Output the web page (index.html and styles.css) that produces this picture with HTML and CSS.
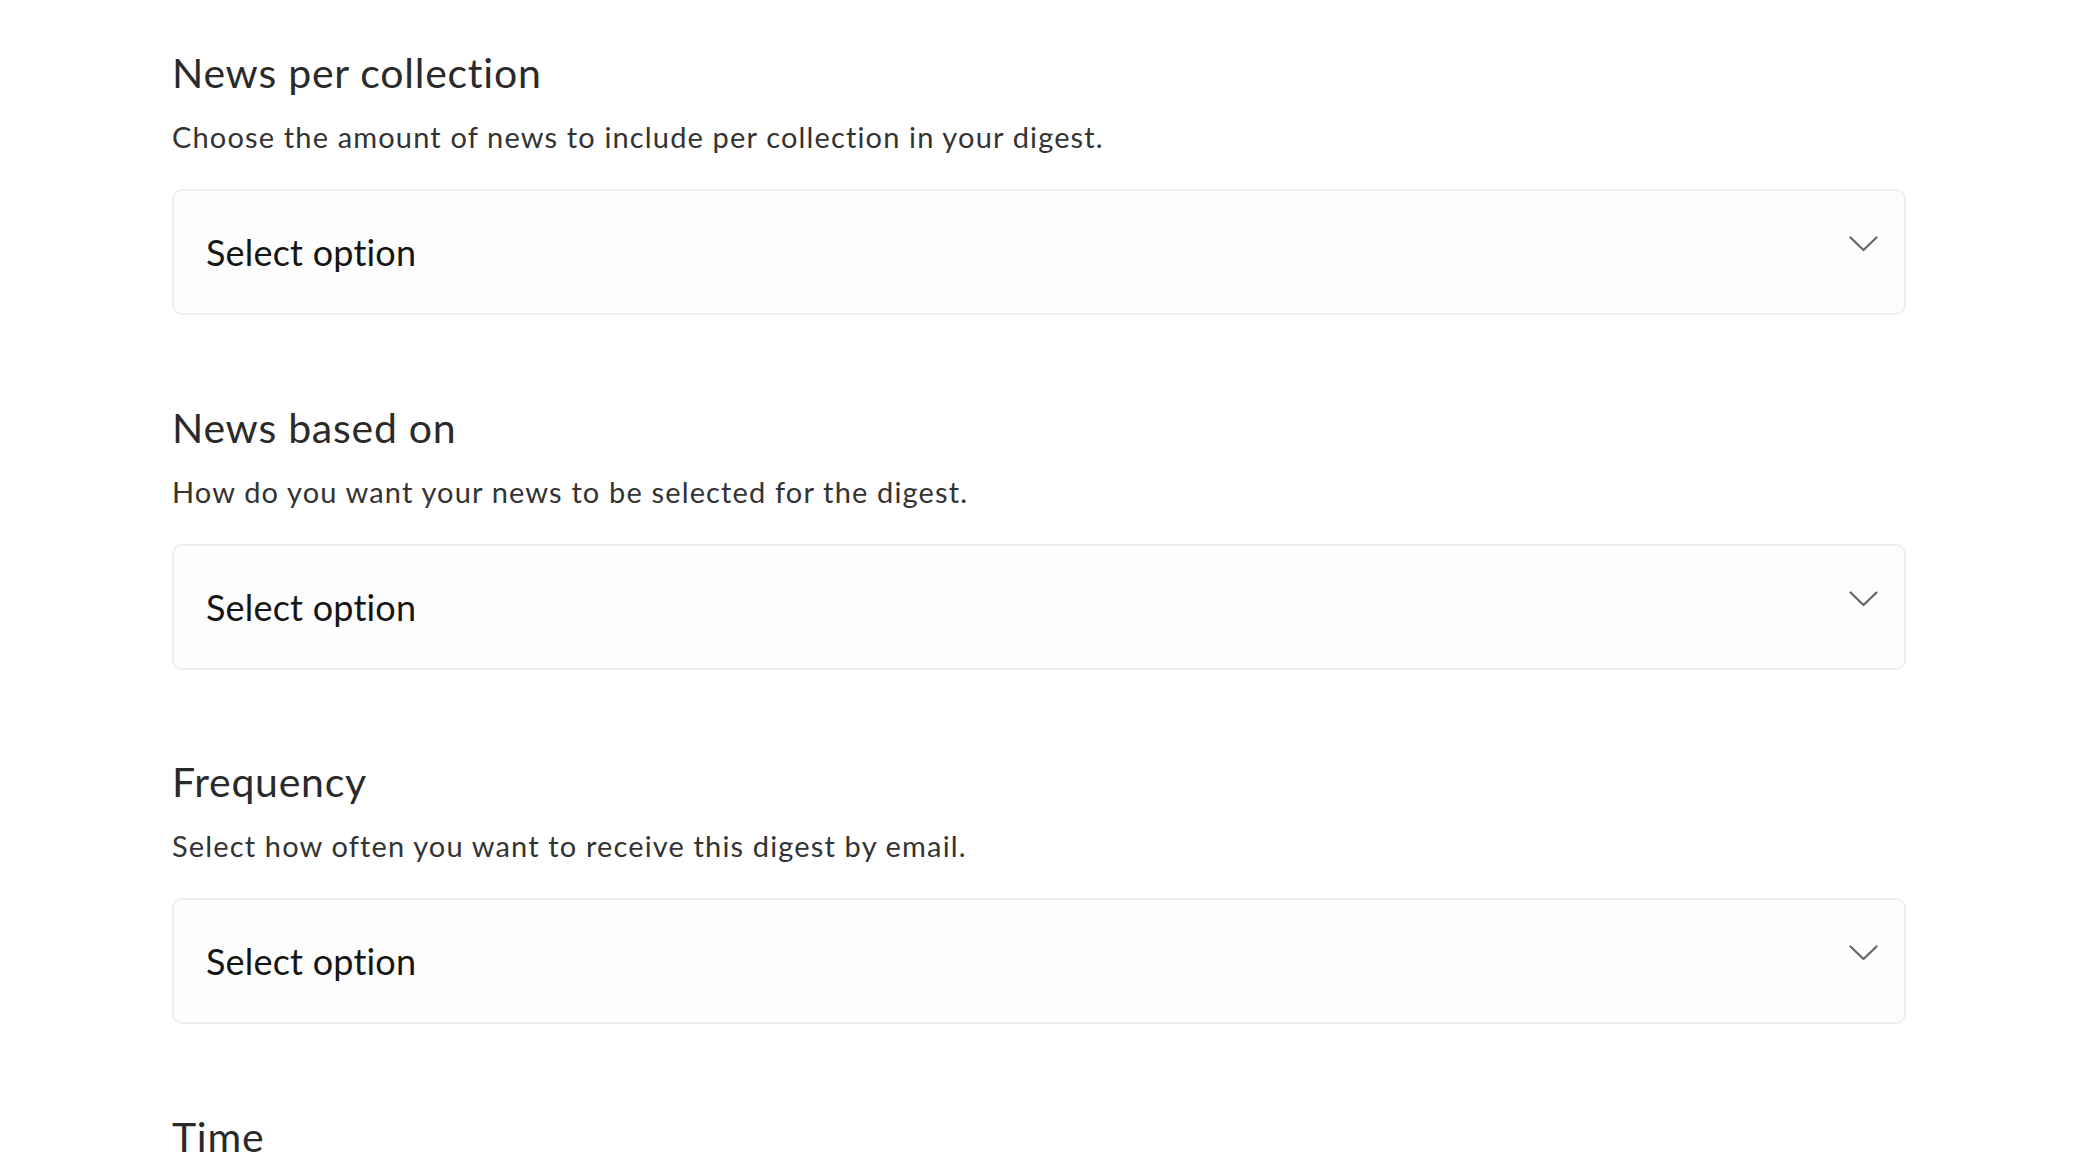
FILE: index.html
```html
<!DOCTYPE html>
<html lang="en">
<head>
<meta charset="utf-8">
<title>Digest settings</title>
<link rel="stylesheet" href="styles.css">
</head>
<body>
<main class="form">
  <section class="field">
    <h2 class="field-title">News per collection</h2>
    <p class="field-desc">Choose the amount of news to include per collection in your digest.</p>
    <div class="select">
      <span class="select-value">Select option</span>
      <svg class="chevron" width="29" height="16" viewBox="0 0 29 16"><polyline points="1.5,1.5 14.5,14 27.5,1.5" fill="none" stroke="#666" stroke-width="2.2" stroke-linecap="round" stroke-linejoin="round"/></svg>
    </div>
  </section>
  <section class="field">
    <h2 class="field-title">News based on</h2>
    <p class="field-desc">How do you want your news to be selected for the digest.</p>
    <div class="select">
      <span class="select-value">Select option</span>
      <svg class="chevron" width="29" height="16" viewBox="0 0 29 16"><polyline points="1.5,1.5 14.5,14 27.5,1.5" fill="none" stroke="#666" stroke-width="2.2" stroke-linecap="round" stroke-linejoin="round"/></svg>
    </div>
  </section>
  <section class="field">
    <h2 class="field-title">Frequency</h2>
    <p class="field-desc">Select how often you want to receive this digest by email.</p>
    <div class="select">
      <span class="select-value">Select option</span>
      <svg class="chevron" width="29" height="16" viewBox="0 0 29 16"><polyline points="1.5,1.5 14.5,14 27.5,1.5" fill="none" stroke="#666" stroke-width="2.2" stroke-linecap="round" stroke-linejoin="round"/></svg>
    </div>
  </section>
  <section class="field">
    <h2 class="field-title">Time</h2>
  </section>
</main>
</body>
</html>
```
FILE: styles.css
```css
html, body {
  margin: 0;
  padding: 0;
  background: #ffffff;
}
body {
  font-family: Lato, "Noto Sans", "Liberation Sans", sans-serif;
  overflow: hidden;
  height: 1168px;
}
.form {
  width: 1734px;
  padding: 49px 0 0 172px;
  display: flex;
  flex-direction: column;
  gap: 88.5px;
}
.field {
  display: flex;
  flex-direction: column;
}
.field-title {
  margin: 0;
  font-size: 41px;
  line-height: 48px;
  font-weight: 400;
  letter-spacing: 0.75px;
  color: #2a2a2a;
}
.field-desc {
  margin: 20px 0 32px;
  font-size: 29px;
  line-height: 40px;
  letter-spacing: 1.15px;
  color: #333333;
}
.select {
  box-sizing: border-box;
  height: 126px;
  border: 2px solid #eeeeee;
  border-radius: 10px;
  background: #fdfdfd;
  display: flex;
  align-items: center;
  justify-content: space-between;
  padding: 0 26px 0 32px;
}
.select-value {
  font-size: 36px;
  letter-spacing: 0.2px;
  color: #151515;
}
.chevron {
  margin-bottom: 16px;
}
```
